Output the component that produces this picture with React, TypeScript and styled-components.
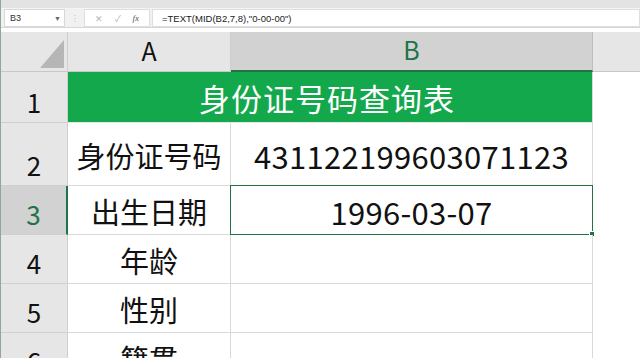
import React from "react";
import styled, { createGlobalStyle, css } from "styled-components";

const GreenColor = "#217346";
const HeaderGray = "#e6e6e6";
const SelectedGray = "#d2d2d2";
const GridLine = "#d9d9d9";

const GlobalStyle = createGlobalStyle`
  html, body {
    margin: 0;
    padding: 0;
    background: #ffffff;
    overflow: hidden;
  }
  body {
    font-family: "Noto Sans CJK SC", "Noto Sans", sans-serif;
  }
`;

const Window = styled.div`
  width: 640px;
  height: 358px;
  overflow: hidden;
  background: #ffffff;
  border-left: 1px solid #8fa89a;
  box-sizing: border-box;
`;

const TopStrip = styled.div`
  height: 8px;
  background: #e3e3e3;
  border-bottom: 1px solid #f4f4f4;
`;

const FormulaBar = styled.div`
  display: flex;
  align-items: stretch;
  height: 18px;
  background: #f1f1f1;
  padding: 0 0 0 3px;
  border-bottom: 1px solid #d6d6d6;
`;

const NameBox = styled.div`
  width: 61px;
  display: flex;
  align-items: center;
  justify-content: space-between;
  background: #ffffff;
  border: 1px solid #d8d8d8;
  box-sizing: border-box;
  padding: 0 3px 0 5px;
  font-family: "Liberation Sans", Arial, sans-serif;
  font-size: 9px;
  color: #333;
`;

const Caret = styled.span`
  font-size: 7px;
  color: #666;
`;

const Dots = styled.div`
  width: 19px;
  display: flex;
  align-items: center;
  justify-content: center;
  color: #c4c4c4;
  font-size: 9px;
  letter-spacing: -1px;
`;

const ActionBox = styled.div`
  width: 66px;
  display: flex;
  align-items: center;
  justify-content: space-around;
  background: #ffffff;
  border: 1px solid #dedede;
  box-sizing: border-box;
  padding: 0 4px;
  color: #b5b5b5;
  font-size: 9px;
`;

const FxLabel = styled.span`
  font-family: "Liberation Serif", serif;
  font-style: italic;
  font-size: 9px;
  color: #555;
`;

const FormulaInput = styled.div`
  flex: 1;
  margin-left: 2px;
  display: flex;
  align-items: center;
  background: #ffffff;
  border: 1px solid #dedede;
  box-sizing: border-box;
  padding-left: 9px;
  font-family: "Liberation Sans", Arial, sans-serif;
  font-size: 9.5px;
  color: #222;
`;

const Gap = styled.div`
  height: 4px;
  background: #ffffff;
`;

const Sheet = styled.div`
  display: grid;
  grid-template-columns: 67px 163px 362px 1fr;
  grid-template-rows: 40px 51px 63px 49px 49px 49px 49px;
`;

const Corner = styled.div`
  position: relative;
  background: ${HeaderGray};
  border-right: 1px solid #cfcfcf;
  border-bottom: 1px solid #c8c8c8;
  box-sizing: border-box;
  &::after {
    content: "";
    position: absolute;
    right: 3px;
    bottom: 3px;
    width: 0;
    height: 0;
    border-left: 24px solid transparent;
    border-bottom: 28px solid #b6b6b6;
  }
`;

const ColHeader = styled.div<{ $selected?: boolean }>`
  display: flex;
  align-items: center;
  justify-content: center;
  padding-bottom: 4px;
  box-sizing: border-box;
  background: ${HeaderGray};
  border-right: 1px solid #cfcfcf;
  border-bottom: 1px solid #c8c8c8;
  font-size: 25px;
  color: #111;
  ${(p) =>
    p.$selected &&
    css`
      background: ${SelectedGray};
      color: ${GreenColor};
      border-right-color: #bdbdbd;
      border-bottom: 2px solid ${GreenColor};
    `}
`;

const RowHeader = styled.div<{ $selected?: boolean }>`
  display: flex;
  align-items: flex-end;
  justify-content: center;
  padding-bottom: 7px;
  box-sizing: border-box;
  background: ${HeaderGray};
  border-right: 1px solid #cfcfcf;
  border-bottom: 1px solid #cfcfcf;
  font-size: 26px;
  line-height: 1;
  color: #111;
  ${(p) =>
    p.$selected &&
    css`
      background: ${SelectedGray};
      color: ${GreenColor};
      border-right: 2px solid ${GreenColor};
    `}
`;

const TitleCell = styled.div`
  grid-column: span 2;
  display: flex;
  align-items: center;
  justify-content: center;
  padding-right: 6px;
  box-sizing: border-box;
  background: #13a84c;
  border-right: 1px solid ${GridLine};
  border-bottom: 1px solid #e6e6e6;
  color: #ffffff;
  font-size: 31px;
  letter-spacing: 1px;
`;

const Cell = styled.div<{ $selected?: boolean }>`
  position: relative;
  display: flex;
  align-items: center;
  justify-content: center;
  padding-top: 2px;
  box-sizing: border-box;
  background: #ffffff;
  border-right: 1px solid ${GridLine};
  border-bottom: 1px solid ${GridLine};
  font-size: 29px;
  color: #111;
  white-space: nowrap;
  ${(p) =>
    p.$selected &&
    css`
      &::before {
        content: "";
        position: absolute;
        inset: -1px -1px -1px -1px;
        border: 1.5px solid ${GreenColor};
        pointer-events: none;
      }
      &::after {
        content: "";
        position: absolute;
        right: -3px;
        bottom: -3px;
        width: 4px;
        height: 4px;
        background: ${GreenColor};
        border: 1px solid #ffffff;
      }
    `}
`;

const NumberText = styled.span`
  font-size: 31px;
  letter-spacing: 0.3px;
`;

const EmptyCell = styled.div<{ $header?: boolean }>`
  background: ${(p) => (p.$header ? HeaderGray : "#ffffff")};
  border-bottom: ${(p) => (p.$header ? "1px solid #c8c8c8" : "none")};
  box-sizing: border-box;
`;

const rows = [
  { n: 2, label: "身份证号码", value: "431122199603071123" },
  { n: 3, label: "出生日期", value: "1996-03-07", selected: true },
  { n: 4, label: "年龄", value: "" },
  { n: 5, label: "性别", value: "" },
  { n: 6, label: "籍贯", value: "" },
];

export default function App() {
  return (
    <>
      <GlobalStyle />
      <Window>
        <TopStrip />
        <FormulaBar>
          <NameBox>
            <span>B3</span>
            <Caret>▼</Caret>
          </NameBox>
          <Dots>⁝</Dots>
          <ActionBox>
            <span>✕</span>
            <span>✓</span>
            <FxLabel>fx</FxLabel>
          </ActionBox>
          <FormulaInput>=TEXT(MID(B2,7,8),"0-00-00")</FormulaInput>
        </FormulaBar>
        <Gap />
        <Sheet>
          <Corner />
          <ColHeader>A</ColHeader>
          <ColHeader $selected>B</ColHeader>
          <EmptyCell $header />

          <RowHeader>1</RowHeader>
          <TitleCell>身份证号码查询表</TitleCell>
          <EmptyCell />

          {rows.map((r) => (
            <React.Fragment key={r.n}>
              <RowHeader $selected={r.selected}>{r.n}</RowHeader>
              <Cell>{r.label}</Cell>
              <Cell $selected={r.selected}>
                <NumberText>{r.value}</NumberText>
              </Cell>
              <EmptyCell />
            </React.Fragment>
          ))}
        </Sheet>
      </Window>
    </>
  );
}
